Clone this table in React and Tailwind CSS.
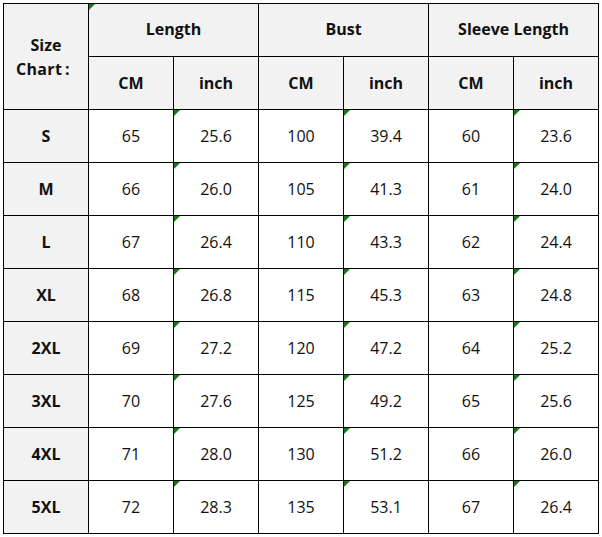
import React from "react";

const rows = [
  ["S", "65", "25.6", "100", "39.4", "60", "23.6"],
  ["M", "66", "26.0", "105", "41.3", "61", "24.0"],
  ["L", "67", "26.4", "110", "43.3", "62", "24.4"],
  ["XL", "68", "26.8", "115", "45.3", "63", "24.8"],
  ["2XL", "69", "27.2", "120", "47.2", "64", "25.2"],
  ["3XL", "70", "27.6", "125", "49.2", "65", "25.6"],
  ["4XL", "71", "28.0", "130", "51.2", "66", "26.0"],
  ["5XL", "72", "28.3", "135", "53.1", "67", "26.4"],
];

function Mark() {
  return (
    <span className="absolute left-0 top-0 w-0 h-0 border-t-[6px] border-r-[6px] border-t-[#137a13] border-r-transparent" />
  );
}

export default function App() {
  return (
    <div className="w-[602px] h-[537px] bg-white pt-[3px] pl-[3px]" style={{ fontFamily: '"Open Sans", "Noto Sans", sans-serif' }}>
      <div className="grid grid-cols-[repeat(7,84px)] grid-rows-[repeat(10,52px)] gap-px p-px bg-black w-[596px] text-[16px] text-[#111]">
        <div className="row-span-2 bg-[#f2f2f2] flex flex-col items-center justify-center text-center font-bold leading-[24px]">
          <span>Size</span>
          <span className="pr-[6px] tracking-[0.3px]">Chart&thinsp;:</span>
        </div>
        <div className="col-span-2 relative bg-[#f2f2f2] flex items-center justify-center font-bold pb-[2px]">
          <Mark />Length
        </div>
        <div className="col-span-2 bg-[#f2f2f2] flex items-center justify-center font-bold pb-[2px]">Bust</div>
        <div className="col-span-2 bg-[#f2f2f2] flex items-center justify-center font-bold pb-[2px]">Sleeve Length</div>
        {["CM", "inch", "CM", "inch", "CM", "inch"].map((t, i) => (
          <div key={i} className="bg-[#f2f2f2] flex items-center justify-center font-bold pb-[1px]">{t}</div>
        ))}
        {rows.map((r) => (
          <React.Fragment key={r[0]}>
            <div className="bg-[#f2f2f2] flex items-center justify-center font-bold">{r[0]}</div>
            {r.slice(1).map((v, i) => (
              <div key={i} className="relative bg-white flex items-center justify-center">
                {i % 2 === 1 && <Mark />}
                {v}
              </div>
            ))}
          </React.Fragment>
        ))}
      </div>
    </div>
  );
}
